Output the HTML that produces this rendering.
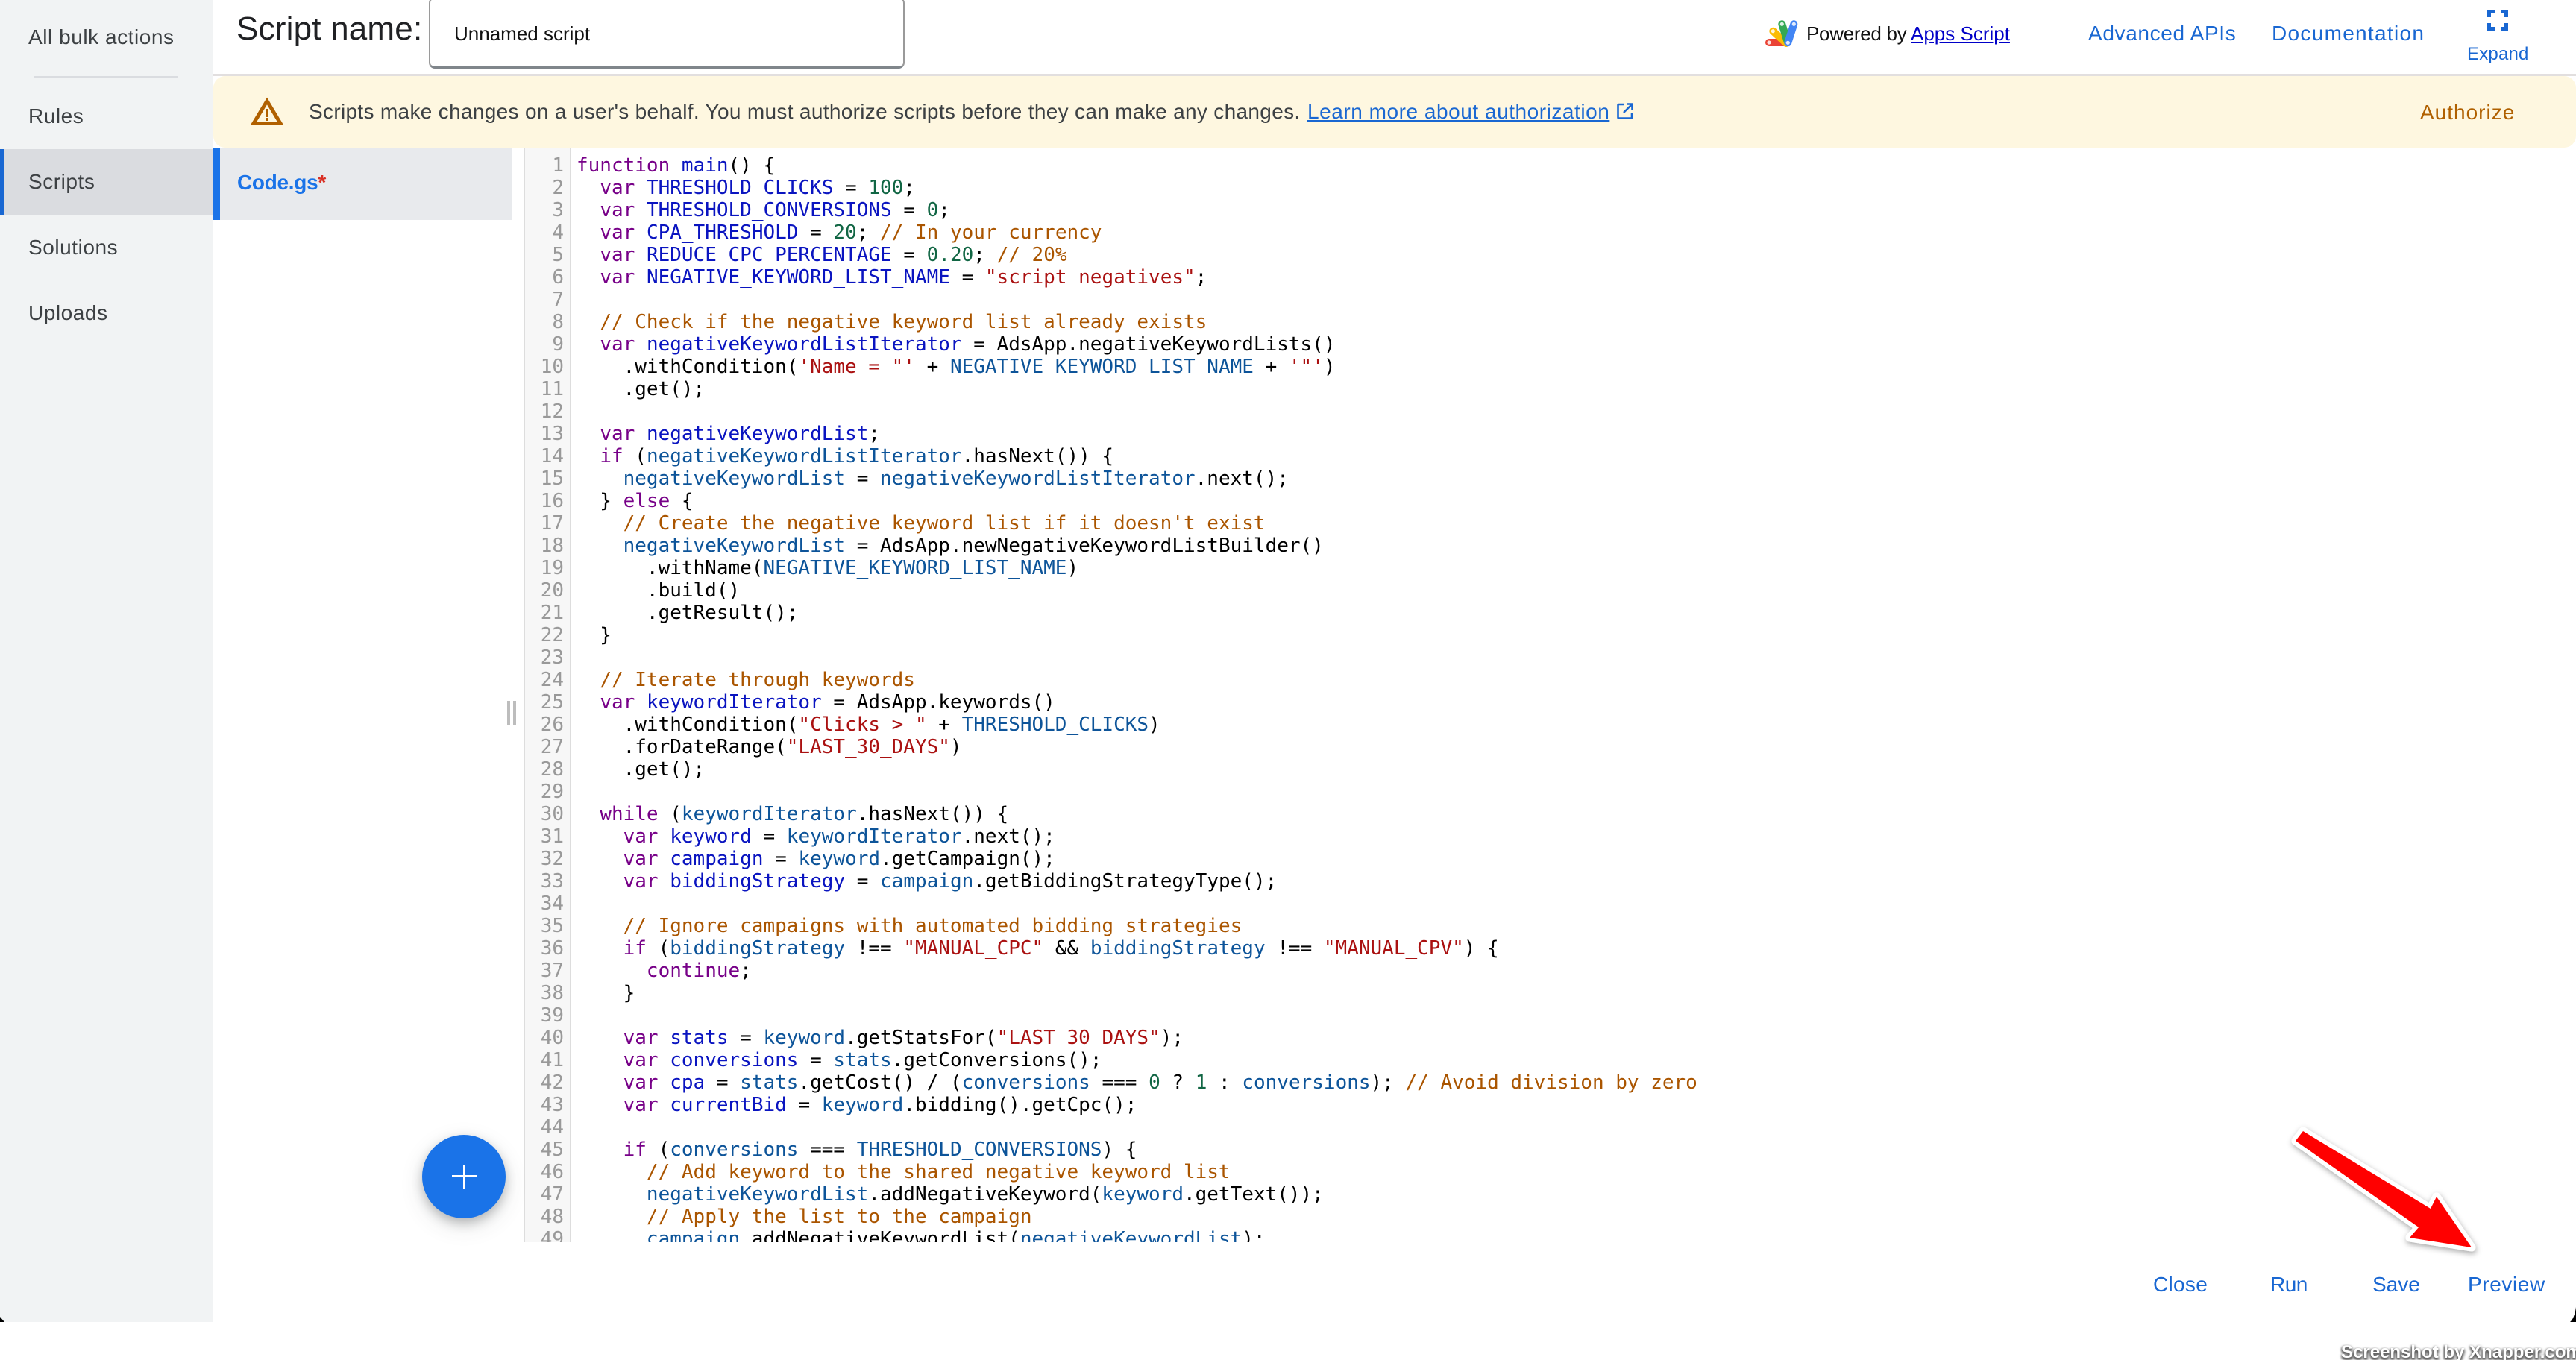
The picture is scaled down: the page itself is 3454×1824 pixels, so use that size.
<!DOCTYPE html>
<html><head><meta charset="utf-8"><title>Script editor</title>
<style>
html,body{margin:0;padding:0;background:#fff}
#p{position:relative;width:3454px;height:1824px;overflow:hidden;background:#fff;font-family:"Liberation Sans",sans-serif}
.t{position:absolute;white-space:pre;line-height:40px;height:40px}
.side{position:absolute;left:0;top:0;width:286px;height:1773px;background:#f1f3f4}
.nav{font-size:28px;color:#3c4043;left:38px;letter-spacing:.55px}
.blue{color:#1967d2;font-size:28px;letter-spacing:.3px}
#gut{position:absolute;left:702px;top:198px;width:60px;height:1468px;background:#f7f7f7;border-left:2px solid #ddd;border-right:2px solid #ddd;box-sizing:content-box;overflow:hidden}
#nums{position:absolute;right:8px;top:9px;text-align:right;color:#999;font:26px/30px "DejaVu Sans Mono",monospace;white-space:pre}
#code{position:absolute;left:773px;top:207px;width:2600px;height:1459px;overflow:hidden;margin:0;font:26px/30px "DejaVu Sans Mono",monospace;color:#000;white-space:pre}
.k{color:#708}.d{color:#0a14c0}.v{color:#0d5499}.n{color:#164}.s{color:#a11}.c{color:#a50}
</style></head><body><div id="p">

<div class="side"></div>
<div class="t nav" style="top:30px">All bulk actions</div>
<div style="position:absolute;left:46px;top:102px;width:192px;height:2px;background:#dadce0"></div>
<div class="t nav" style="top:136px">Rules</div>
<div style="position:absolute;left:0;top:200px;width:286px;height:88px;background:#dadce0"></div>
<div style="position:absolute;left:0;top:200px;width:6px;height:88px;background:#1967d2"></div>
<div class="t nav" style="top:224px">Scripts</div>
<div class="t nav" style="top:312px">Solutions</div>
<div class="t nav" style="top:400px">Uploads</div>

<div class="t" style="left:317px;top:19px;font-size:44px;color:#202124;letter-spacing:.2px">Script name:</div>
<div style="position:absolute;left:575px;top:-4px;width:638px;height:96px;box-sizing:border-box;border:2px solid #9a9a9a;border-bottom:3px solid #80868b;border-radius:8px;background:#fff"></div>
<div class="t" style="left:609px;top:25px;font-size:26px;color:#111">Unnamed script</div>

<svg style="position:absolute;left:2360px;top:20px" width="60" height="50" viewBox="60 20 60 50" fill="none">
<path d="M72 57H93" stroke="#ea4335" stroke-width="10" stroke-linecap="round"/>
<path d="M77.3 41.7L95 58" stroke="#fbbc04" stroke-width="10" stroke-linecap="round"/>
<path d="M89.3 32.3L96.7 56" stroke="#34a853" stroke-width="10" stroke-linecap="round"/>
<path d="M105.3 32.3L97.3 57.3" stroke="#4285f4" stroke-width="10" stroke-linecap="round"/>
<g fill="#fff" opacity=".85"><circle cx="72" cy="57" r="2.6"/><circle cx="77.3" cy="41.7" r="2.6"/><circle cx="89.3" cy="32.3" r="2.6"/><circle cx="105.3" cy="32.3" r="2.6"/><circle cx="97.3" cy="57.3" r="2.6"/></g>
</svg>
<div class="t" style="left:2422px;top:25px;font-size:26px;color:#111;letter-spacing:-.3px">Powered by</div>
<div class="t" style="left:2562px;top:25px;font-size:26px;color:#0000c8;text-decoration:underline">Apps Script</div>
<div class="t blue" style="left:2800px;top:25px;letter-spacing:.65px">Advanced APIs</div>
<div class="t blue" style="left:3046px;top:25px;letter-spacing:1.3px">Documentation</div>
<svg style="position:absolute;left:3330px;top:8px" width="38" height="38" viewBox="0 0 38 38" fill="none" stroke="#1967d2" stroke-width="5">
<path d="M7.5 15V7.5H15M23 7.5H30.5V15M7.5 23V30.5H15M23 30.5H30.5V23"/></svg>
<div class="t" style="left:3308px;top:53px;font-size:24px;color:#1967d2;letter-spacing:.2px">Expand</div>

<div style="position:absolute;left:286px;top:99px;width:3168px;height:3px;background:#e2dfdf"></div>
<div style="position:absolute;left:286px;top:102px;width:3168px;height:96px;background:#fef7e0;border-radius:16px"></div>
<svg style="position:absolute;left:330px;top:126px" width="56" height="48" viewBox="330 126 56 48" fill="none">
<path d="M358 135.5L340 165.5H376Z" stroke="#b06000" stroke-width="5"/>
<rect x="356" y="146" width="4" height="11" fill="#b06000"/><rect x="356" y="158" width="4" height="4" fill="#b06000"/>
</svg>
<div class="t" style="left:414px;top:130px;font-size:28px;color:#3c4043;letter-spacing:.32px">Scripts make changes on a user's behalf. You must authorize scripts before they can make any changes.</div>
<div class="t" style="left:1753px;top:130px;font-size:28px;color:#1967d2;text-decoration:underline;letter-spacing:.54px">Learn more about authorization</div>
<svg style="position:absolute;left:2166px;top:136px" width="26" height="26" viewBox="0 0 26 26" fill="none" stroke="#1967d2" stroke-width="2.6">
<path d="M11 4H4.5Q3.5 4 3.5 5V21.500Q3.500 22.500 4.500 22.500H21Q22 22.500 22 21.500V15M15 3.500H22.500V11M22 4L11 15"/></svg>
<div class="t" style="left:3245px;top:131px;font-size:28px;color:#b06000;letter-spacing:1px">Authorize</div>

<div style="position:absolute;left:286px;top:198px;width:400px;height:97px;background:#e8eaed"></div>
<div style="position:absolute;left:286px;top:198px;width:9px;height:97px;background:#1a73e8"></div>
<div class="t" style="left:318px;top:225px;font-size:28px;font-weight:bold;color:#1a73e8;letter-spacing:-.3px">Code.gs<span style="color:#d93025">*</span></div>

<div style="position:absolute;left:680px;top:940px;width:4px;height:32px;background:#bdbdbd"></div>
<div style="position:absolute;left:688px;top:940px;width:4px;height:32px;background:#bdbdbd"></div>

<div id="gut"><div id="nums">1
2
3
4
5
6
7
8
9
10
11
12
13
14
15
16
17
18
19
20
21
22
23
24
25
26
27
28
29
30
31
32
33
34
35
36
37
38
39
40
41
42
43
44
45
46
47
48
49</div></div>

<pre id="code"><span class="k">function</span> <span class="d">main</span>() {
  <span class="k">var</span> <span class="d">THRESHOLD_CLICKS</span> = <span class="n">100</span>;
  <span class="k">var</span> <span class="d">THRESHOLD_CONVERSIONS</span> = <span class="n">0</span>;
  <span class="k">var</span> <span class="d">CPA_THRESHOLD</span> = <span class="n">20</span>; <span class="c">// In your currency</span>
  <span class="k">var</span> <span class="d">REDUCE_CPC_PERCENTAGE</span> = <span class="n">0.20</span>; <span class="c">// 20%</span>
  <span class="k">var</span> <span class="d">NEGATIVE_KEYWORD_LIST_NAME</span> = <span class="s">"script negatives"</span>;

  <span class="c">// Check if the negative keyword list already exists</span>
  <span class="k">var</span> <span class="d">negativeKeywordListIterator</span> = AdsApp.negativeKeywordLists()
    .withCondition(<span class="s">'Name = "'</span> + <span class="v">NEGATIVE_KEYWORD_LIST_NAME</span> + <span class="s">'"'</span>)
    .get();

  <span class="k">var</span> <span class="d">negativeKeywordList</span>;
  <span class="k">if</span> (<span class="v">negativeKeywordListIterator</span>.hasNext()) {
    <span class="v">negativeKeywordList</span> = <span class="v">negativeKeywordListIterator</span>.next();
  } <span class="k">else</span> {
    <span class="c">// Create the negative keyword list if it doesn't exist</span>
    <span class="v">negativeKeywordList</span> = AdsApp.newNegativeKeywordListBuilder()
      .withName(<span class="v">NEGATIVE_KEYWORD_LIST_NAME</span>)
      .build()
      .getResult();
  }

  <span class="c">// Iterate through keywords</span>
  <span class="k">var</span> <span class="d">keywordIterator</span> = AdsApp.keywords()
    .withCondition(<span class="s">"Clicks &gt; "</span> + <span class="v">THRESHOLD_CLICKS</span>)
    .forDateRange(<span class="s">"LAST_30_DAYS"</span>)
    .get();

  <span class="k">while</span> (<span class="v">keywordIterator</span>.hasNext()) {
    <span class="k">var</span> <span class="d">keyword</span> = <span class="v">keywordIterator</span>.next();
    <span class="k">var</span> <span class="d">campaign</span> = <span class="v">keyword</span>.getCampaign();
    <span class="k">var</span> <span class="d">biddingStrategy</span> = <span class="v">campaign</span>.getBiddingStrategyType();

    <span class="c">// Ignore campaigns with automated bidding strategies</span>
    <span class="k">if</span> (<span class="v">biddingStrategy</span> !== <span class="s">"MANUAL_CPC"</span> &amp;&amp; <span class="v">biddingStrategy</span> !== <span class="s">"MANUAL_CPV"</span>) {
      <span class="k">continue</span>;
    }

    <span class="k">var</span> <span class="d">stats</span> = <span class="v">keyword</span>.getStatsFor(<span class="s">"LAST_30_DAYS"</span>);
    <span class="k">var</span> <span class="d">conversions</span> = <span class="v">stats</span>.getConversions();
    <span class="k">var</span> <span class="d">cpa</span> = <span class="v">stats</span>.getCost() / (<span class="v">conversions</span> === <span class="n">0</span> ? <span class="n">1</span> : <span class="v">conversions</span>); <span class="c">// Avoid division by zero</span>
    <span class="k">var</span> <span class="d">currentBid</span> = <span class="v">keyword</span>.bidding().getCpc();

    <span class="k">if</span> (<span class="v">conversions</span> === <span class="v">THRESHOLD_CONVERSIONS</span>) {
      <span class="c">// Add keyword to the shared negative keyword list</span>
      <span class="v">negativeKeywordList</span>.addNegativeKeyword(<span class="v">keyword</span>.getText());
      <span class="c">// Apply the list to the campaign</span>
      <span class="v">campaign</span>.addNegativeKeywordList(<span class="v">negativeKeywordList</span>);</pre>

<div style="position:absolute;left:566px;top:1522px;width:112px;height:112px;border-radius:50%;background:#1a73e8;box-shadow:0 6px 14px rgba(60,64,67,.3),0 10px 30px rgba(60,64,67,.15)"></div>
<div style="position:absolute;left:606px;top:1576px;width:33px;height:3px;background:#fff"></div>
<div style="position:absolute;left:621px;top:1562px;width:3px;height:32px;background:#fff"></div>

<svg style="position:absolute;left:3050px;top:1490px;overflow:visible" width="300" height="210" viewBox="3050 1490 300 210">
<defs><filter id="sh" x="-10%" y="-10%" width="125%" height="125%"><feDropShadow dx="1" dy="3" stdDeviation="4" flood-color="#000" flood-opacity=".35"/></filter></defs>
<polygon points="3088,1517 3078,1530 3243,1646 3231,1660 3314,1673 3267,1605 3259,1621" fill="#f00" stroke="#fff" stroke-width="11" stroke-linejoin="round" filter="url(#sh)"/>
<polygon points="3088,1517 3078,1530 3243,1646 3231,1660 3314,1673 3267,1605 3259,1621" fill="#f00"/>
</svg>

<div class="t blue" style="left:2887px;top:1703px">Close</div>
<div class="t blue" style="left:3044px;top:1703px;letter-spacing:-.5px">Run</div>
<div class="t blue" style="left:3181px;top:1703px;letter-spacing:0">Save</div>
<div class="t blue" style="left:3309px;top:1703px;letter-spacing:.6px">Preview</div>

<svg style="position:absolute;left:0;top:1700px" width="3454" height="80" viewBox="0 1700 3454 80">
<path d="M0 1766L6 1773H0Z" fill="#000"/>
<path d="M3454 1753Q3452 1768 3446 1773H3454Z" fill="#000"/>
</svg>

<div class="t" style="left:3139px;top:1794px;font-size:24px;font-weight:bold;color:#fff;text-shadow:0 2px 3px #555,1px 3px 4px #555,-1px 1px 3px #777">Screenshot by Xnapper.com</div>

</div></body></html>
